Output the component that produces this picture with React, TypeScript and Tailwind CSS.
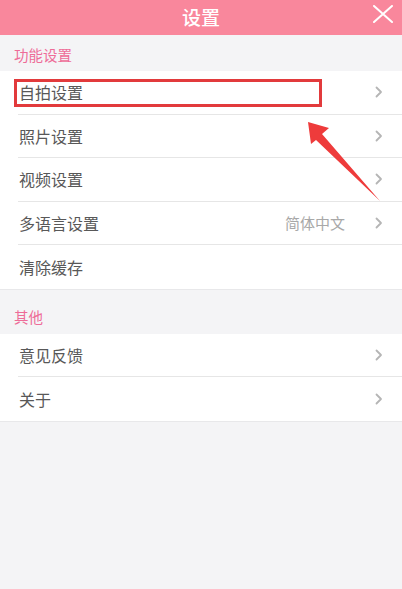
const font = { fontFamily: '"Noto Sans CJK SC", "Liberation Sans", sans-serif' };

function Chevron() {
  return (
    <svg width="8" height="12" viewBox="0 0 8 12" className="shrink-0">
      <polyline points="1.5,1.5 6,6 1.5,10.5" fill="none" stroke="#b5b5b5" strokeWidth="1.8" strokeLinecap="round" strokeLinejoin="round" />
    </svg>
  );
}

function Row({ label, value, arrow = true, last = false }: { label: string; value?: string; arrow?: boolean; last?: boolean }) {
  return (
    <div className="pl-[18px]">
      <div className={`h-[43.5px] flex items-center pr-[19px] ${last ? "" : "border-b border-[#e6e6e6]"}`}>
        <span className="flex-1 pl-px text-[16px] text-[#585858]">{label}</span>
        {value && <span className="mr-[30px] text-[15px] text-[#a8a8a8]">{value}</span>}
        {arrow && <Chevron />}
      </div>
    </div>
  );
}

export default function App() {
  return (
    <div className="relative w-[402px] h-[589px] bg-[#f4f4f6] overflow-hidden" style={font}>
      {/* HEADER */}
      <header className="h-[35px] bg-[#f9879c] flex items-center justify-center relative">
        <h1 className="text-[19px] font-medium text-white">设置</h1>
        <svg className="absolute left-[373px] top-[5px]" width="20" height="18" viewBox="0 0 20 18">
          <path d="M1 1L19 17M19 1L1 17" stroke="white" strokeWidth="2" strokeLinecap="round" />
        </svg>
      </header>

      {/* 功能设置 */}
      <div className="h-[36px] flex items-end pl-[14px] pb-[5px] text-[14.5px] text-[#ee6c98]">功能设置</div>
      <div className="bg-white">
        <Row label="自拍设置" />
        <Row label="照片设置" />
        <Row label="视频设置" />
        <Row label="多语言设置" value="简体中文" />
        <Row label="清除缓存" arrow={false} last />
      </div>

      {/* 其他 */}
      <div className="h-[45px] flex items-end pl-[14px] pb-[6px] text-[14.5px] text-[#ee6c98] border-t border-[#e8e8ea]">其他</div>
      <div className="bg-white border-b border-[#e8e8ea]">
        <Row label="意见反馈" />
        <Row label="关于" last />
      </div>

      {/* annotation */}
      <div className="absolute left-[14px] top-[79px] w-[308px] h-[28px] border-[3px] border-[#e23a3c]" />
      <svg className="absolute left-0 top-0" width="402" height="589" viewBox="0 0 402 589">
        <polygon points="308,122 329,128 322,134 380,201 316,140 311,144" fill="#ee3b3b" />
      </svg>
    </div>
  );
}
